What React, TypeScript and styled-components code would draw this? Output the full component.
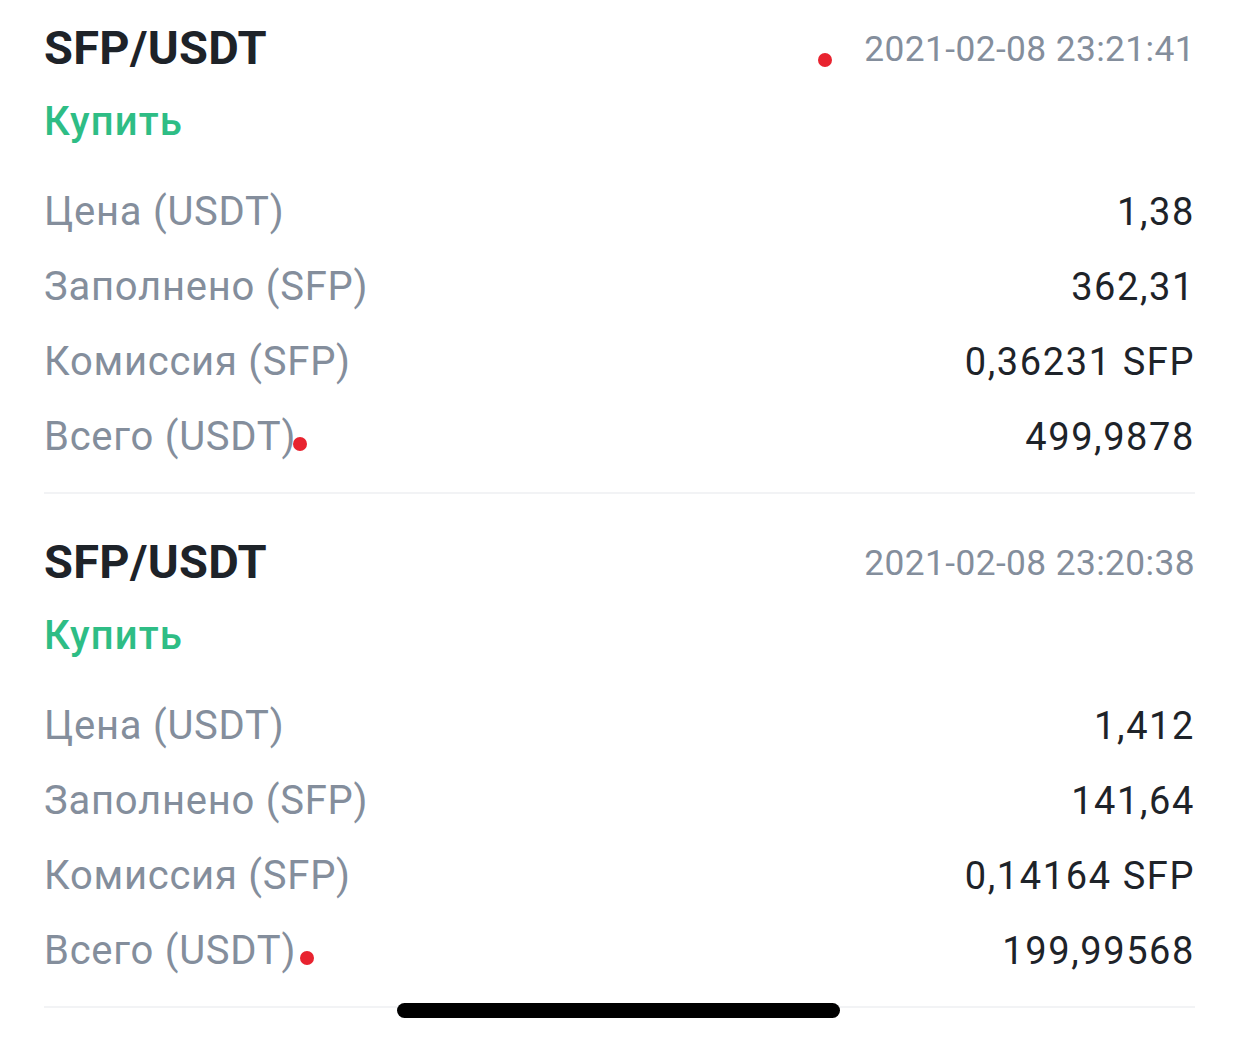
import styled, { createGlobalStyle } from 'styled-components'

const GlobalStyle = createGlobalStyle`
  html, body {
    margin: 0;
    padding: 0;
    background: #ffffff;
    overflow: hidden;
  }
  body {
    font-family: Roboto, "Noto Sans", sans-serif;
    -webkit-font-smoothing: antialiased;
  }
`

const Screen = styled.div`
  width: 1238px;
  height: 1041px;
  overflow: hidden;
  background: #ffffff;
`

// scrolled list: the first card is partly above the top edge
const TradeList = styled.div`
  margin-top: -20px;
  padding: 0 43px 0 44px;
`

const TradeCard = styled.div`
  padding: 38px 0 18px;
  border-bottom: 2px solid #f2f3f5;
`

const Header = styled.div`
  display: flex;
  align-items: center;
  justify-content: space-between;
  height: 60px;
`

const Pair = styled.div`
  font-size: 47px;
  line-height: 60px;
  font-weight: 700;
  color: #1e2329;
  letter-spacing: 0.3px;
`

const Time = styled.div`
  display: flex;
  align-items: baseline;
  font-size: 35.3px;
  line-height: 60px;
  color: #848e9c;
  letter-spacing: 0.4px;
  padding-top: 2px;
`

const Mark = styled.span<{ $gap?: number; $lift?: number }>`
  display: inline-block;
  width: 14px;
  height: 14px;
  border-radius: 50%;
  background: #e8232f;
  margin-left: ${p => p.$gap ?? 0}px;
  vertical-align: baseline;
  position: relative;
  top: ${p => p.$lift ?? 0}px;
`

const TimeMark = styled(Mark)`
  margin-right: 32px;
  top: 6px;
`

const Side = styled.div`
  margin-top: 20px;
  font-size: 40px;
  line-height: 48px;
  font-weight: 500;
  color: #2ebd85;
  letter-spacing: 1.1px;
`

const Details = styled.div`
  margin-top: 28px;
  display: flex;
  flex-direction: column;
`

const Row = styled.div`
  display: flex;
  align-items: baseline;
  justify-content: space-between;
  height: 75px;
  line-height: 75px;
`

const Label = styled.span`
  font-size: 40px;
  color: #848e9c;
  letter-spacing: 0.75px;
`

const Value = styled.span`
  font-size: 38px;
  color: #1e2329;
  letter-spacing: 1.6px;
`

const HomeIndicator = styled.div`
  position: fixed;
  left: 397px;
  bottom: 23px;
  width: 443px;
  height: 15px;
  border-radius: 8px;
  background: #000000;
`

type Trade = {
  pair: string
  time: string
  timeMark?: boolean
  totalMarkGap: number
  price: string
  filled: string
  fee: string
  total: string
}

const trades: Trade[] = [
  {
    pair: 'SFP/USDT',
    time: '2021-02-08 23:21:41',
    timeMark: true,
    totalMarkGap: -3,
    price: '1,38',
    filled: '362,31',
    fee: '0,36231 SFP',
    total: '499,9878',
  },
  {
    pair: 'SFP/USDT',
    time: '2021-02-08 23:20:38',
    totalMarkGap: 4,
    price: '1,412',
    filled: '141,64',
    fee: '0,14164 SFP',
    total: '199,99568',
  },
]

export default function App() {
  return (
    <Screen>
      <GlobalStyle />
      <TradeList>
        {trades.map((t, i) => (
          <TradeCard key={i}>
            <Header>
              <Pair>{t.pair}</Pair>
              <Time>
                {t.timeMark && <TimeMark />}
                {t.time}
              </Time>
            </Header>
            <Side>Купить</Side>
            <Details>
              <Row>
                <Label>Цена (USDT)</Label>
                <Value>{t.price}</Value>
              </Row>
              <Row>
                <Label>Заполнено (SFP)</Label>
                <Value>{t.filled}</Value>
              </Row>
              <Row>
                <Label>Комиссия (SFP)</Label>
                <Value>{t.fee}</Value>
              </Row>
              <Row>
                <Label>
                  Всего (USDT)
                  <Mark $gap={t.totalMarkGap} $lift={1} />
                </Label>
                <Value>{t.total}</Value>
              </Row>
            </Details>
          </TradeCard>
        ))}
      </TradeList>
      <HomeIndicator />
    </Screen>
  )
}
